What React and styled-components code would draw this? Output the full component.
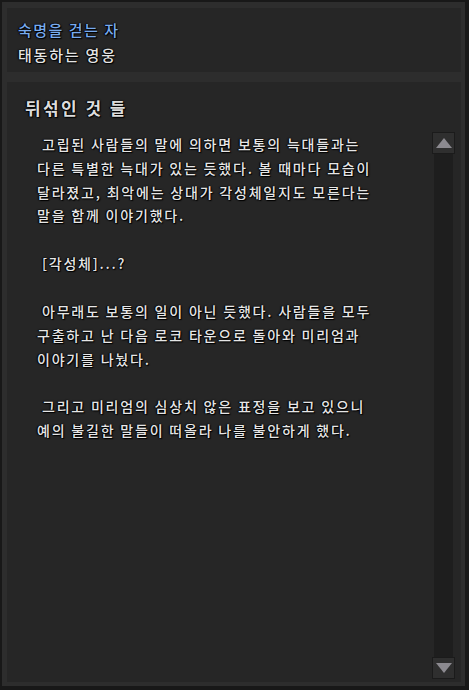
import React from 'react';
import styled, { createGlobalStyle } from 'styled-components';

const GlobalStyle = createGlobalStyle`
    html, body {
        margin: 0;
        padding: 0;
        background: #141414;
    }
    * {
        box-sizing: border-box;
    }
`;

const paragraphs = [
    ' 고립된 사람들의 말에 의하면 보통의 늑대들과는\n다른 특별한 늑대가 있는 듯했다. 볼 때마다 모습이\n달라졌고, 최악에는 상대가 각성체일지도 모른다는\n말을 함께 이야기했다.',
    ' [각성체]...?',
    ' 아무래도 보통의 일이 아닌 듯했다. 사람들을 모두\n구출하고 난 다음 로코 타운으로 돌아와 미리엄과\n이야기를 나눴다.',
    ' 그리고 미리엄의 심상치 않은 표정을 보고 있으니\n예의 불길한 말들이 떠올라 나를 불안하게 했다.',
];

function App() {
    return (
        <>
            <GlobalStyle />
            <Frame>
                <Header>
                    <QuestTitle>숙명을 걷는 자</QuestTitle>
                    <QuestSub>태동하는 영웅</QuestSub>
                </Header>

                <Content>
                    <Heading>뒤섞인 것 들</Heading>
                    <Body>
                        <TextArea>
                            {paragraphs.map((p, i) => (
                                <Paragraph key={i}>{p}</Paragraph>
                            ))}
                        </TextArea>
                        <ScrollBar>
                            <ScrollButton>
                                <Arrow $dir="up" />
                            </ScrollButton>
                            <Track />
                            <ScrollButton>
                                <Arrow $dir="down" />
                            </ScrollButton>
                        </ScrollBar>
                    </Body>
                </Content>
            </Frame>
        </>
    );
}

export default App;

const outline = '0 0 2px #000, 1px 1px 1px #000, -1px 0 1px #000';

const Frame = styled.div`
    width: 469px;
    height: 690px;
    background: #2d2d2d;
    border-style: solid;
    border-color: #181818;
    border-width: 2px 4px 4px 2px;
    padding: 6px 4px 4px 5px;
    display: flex;
    flex-direction: column;
    gap: 10px;
    font-family: "Noto Sans CJK KR", "Noto Sans", sans-serif;
`;

const Header = styled.div`
    height: 64px;
    background: #262626;
    padding: 12px 11px 0;
    display: flex;
    flex-direction: column;
    gap: 5px;
`;

const QuestTitle = styled.div`
    font-size: 15px;
    font-weight: 500;
    line-height: 20px;
    color: #78abee;
    letter-spacing: 1.5px;
    text-shadow: ${outline};
`;

const QuestSub = styled.div`
    font-size: 15px;
    font-weight: 500;
    line-height: 20px;
    color: #e4e4e4;
    letter-spacing: 1.8px;
    text-shadow: ${outline};
`;

const Content = styled.div`
    flex: 1;
    background: #262626;
    display: flex;
    flex-direction: column;
    padding: 14px 6px 3px 18px;
    min-height: 0;
`;

const Heading = styled.div`
    font-size: 17px;
    font-weight: bold;
    line-height: 24px;
    color: #dcdcdc;
    letter-spacing: 2.4px;
    text-shadow: ${outline};
    margin-bottom: 12px;
`;

const Body = styled.div`
    flex: 1;
    display: flex;
    min-height: 0;
`;

const TextArea = styled.div`
    flex: 1;
    padding-left: 12px;
    padding-top: 1px;
`;

const Paragraph = styled.p`
    margin: 0 0 24px;
    white-space: pre-wrap;
    font-size: 14px;
    font-weight: 500;
    line-height: 23.8px;
    letter-spacing: 1.8px;
    color: #e6e6e6;
    text-shadow: ${outline};
`;

const ScrollBar = styled.div`
    width: 23px;
    display: flex;
    flex-direction: column;
    align-items: center;
`;

const ScrollButton = styled.div`
    width: 23px;
    height: 22px;
    background: #2f2f2f;
    border: 1px solid #1b1b1b;
    display: flex;
    align-items: center;
    justify-content: center;
`;

const Track = styled.div`
    flex: 1;
    width: 19px;
    background: #1e1e1e;
`;

const Arrow = styled.div`
    width: 0;
    height: 0;
    border-left: 8px solid transparent;
    border-right: 8px solid transparent;
    ${(p) =>
        p.$dir === 'up'
            ? 'border-bottom: 10px solid #8c8a90;'
            : 'border-top: 10px solid #8c8a90;'}
`;
